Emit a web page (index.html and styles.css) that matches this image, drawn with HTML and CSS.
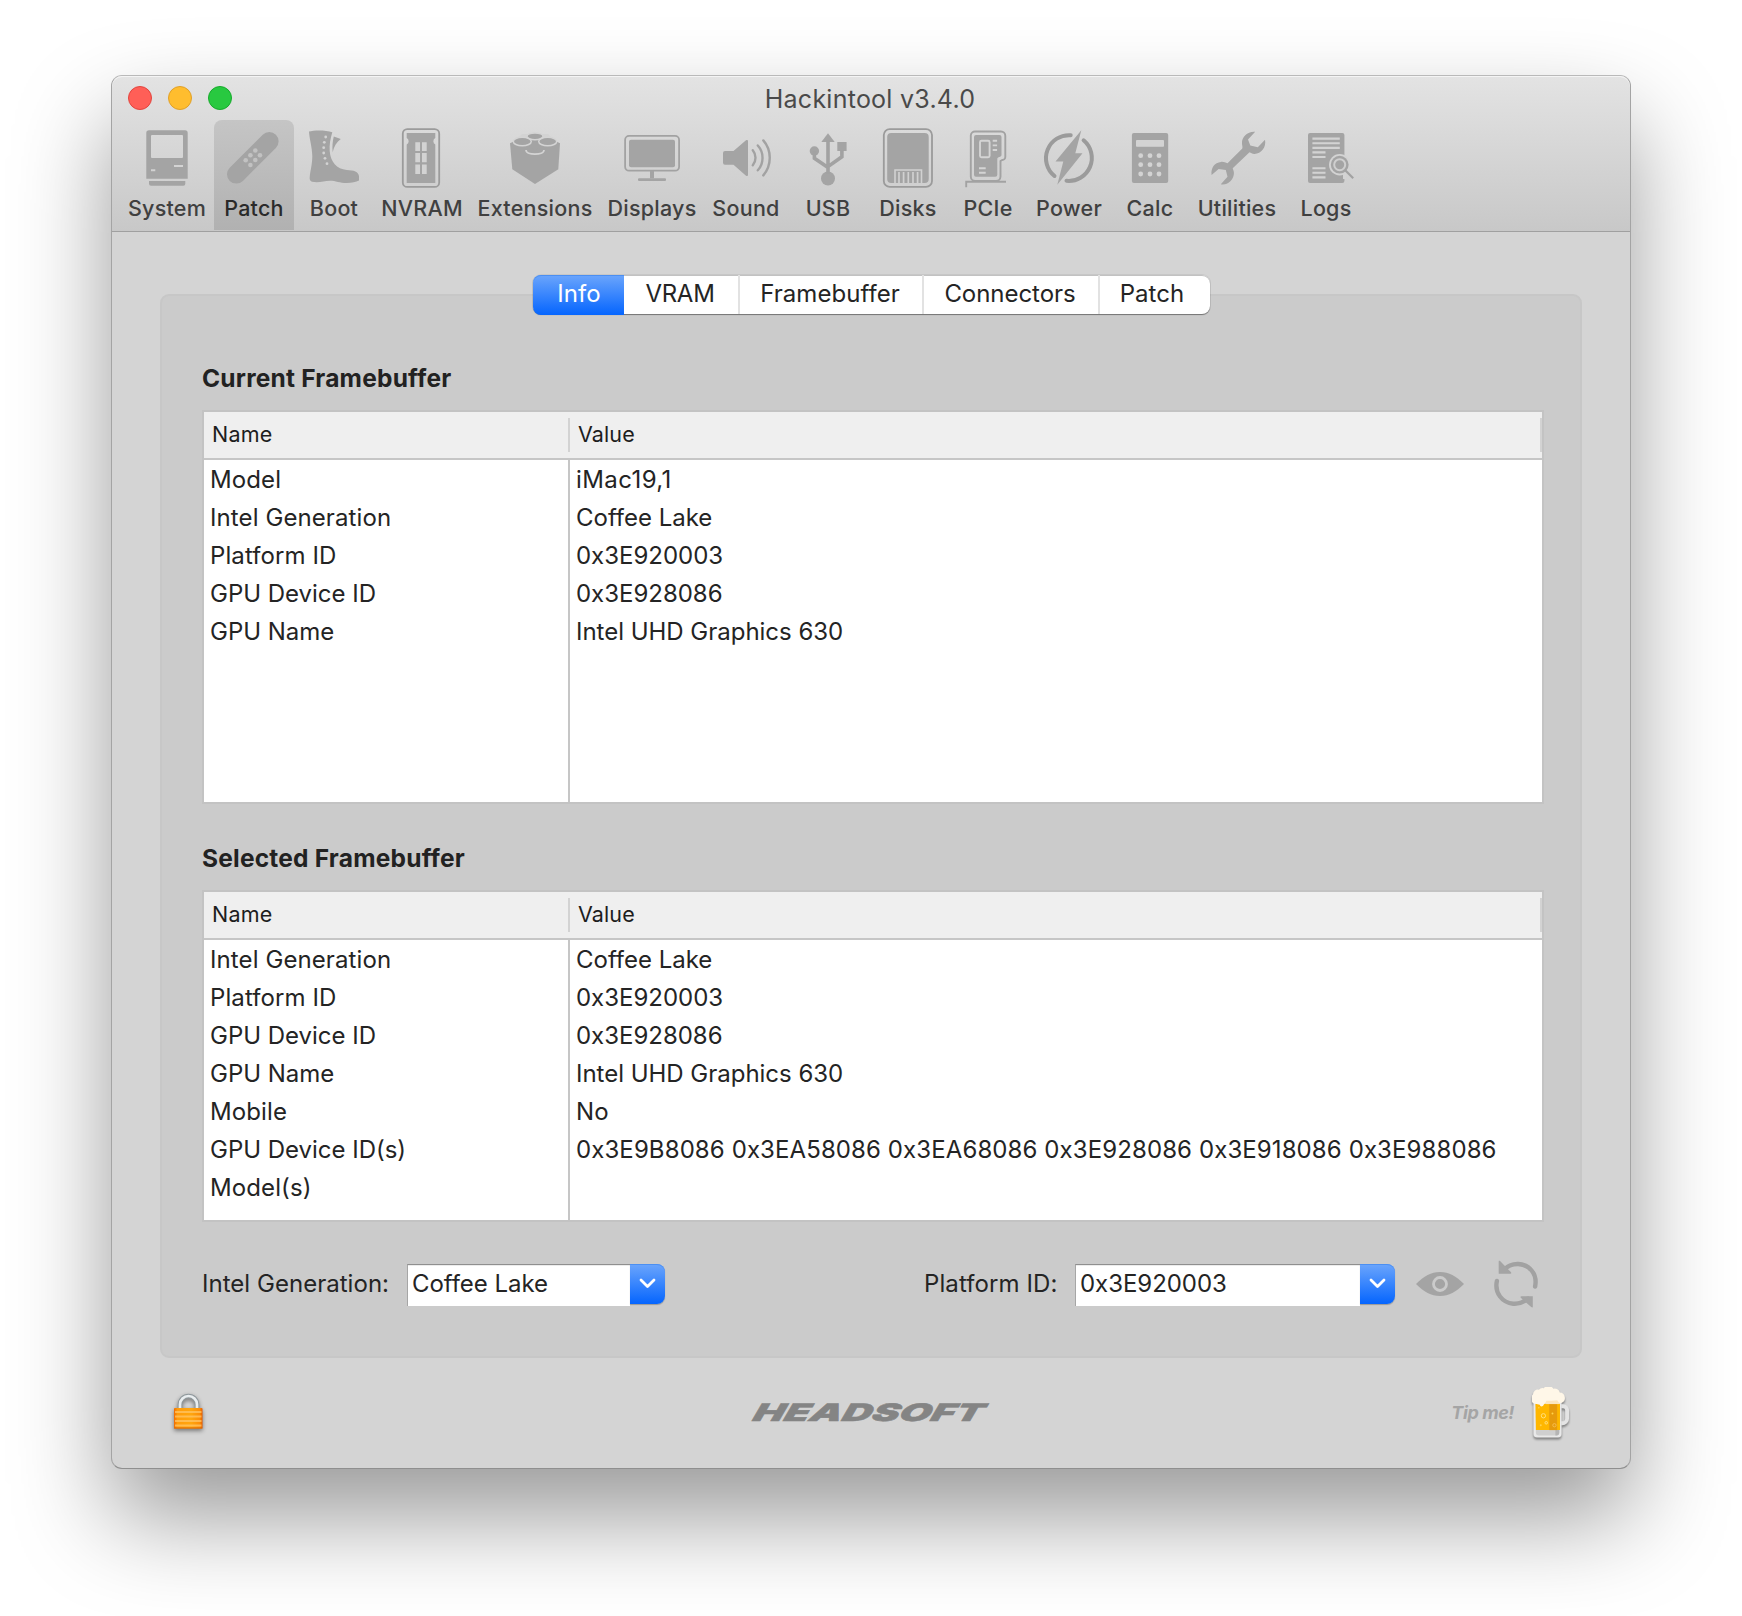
FILE: index.html
```html
<!DOCTYPE html>
<html lang="en">
<head>
<meta charset="utf-8">
<title>Hackintool v3.4.0</title>
<link rel="stylesheet" href="styles.css">
</head>
<body>
<main class="window">
  <header class="chrome">
    <div class="titlebar">
      <div class="lights"><i class="light close"></i><i class="light minimise"></i><i class="light zoom"></i></div>
      <h1 class="title">Hackintool v3.4.0</h1>
    </div>
    <nav class="toolbar">
      <a class="tool w94">
        <svg class="icon" viewBox="0 0 64 64"><path fill-rule="evenodd" d="M14 4.3h36a2.7 2.7 0 0 1 2.7 2.7v45.7H11.3V7A2.7 2.7 0 0 1 14 4.3zM17 9a1 1 0 0 0-1 1v21a1 1 0 0 0 1 1h30a1 1 0 0 0 1-1V10a1 1 0 0 0-1-1zM39 39v2h9v-2zM16 43.3v2h4.3v-2z"/><path d="M14 55h36.3v2.700a2 2 0 0 1-2 2H16a2 2 0 0 1-2-2z"/></svg>
        <span>System</span></a>
      <a class="tool w80 active">
        <svg class="icon" viewBox="0 0 64 64"><path d="M14.3 48.3l33-33" stroke="#a4a4a4" stroke-width="18.6" stroke-linecap="round"/><g fill="#c2c2c2"><circle cx="33.3" cy="24.5" r="2.3"/><circle cx="38" cy="29.3" r="2.3"/><circle cx="28.4" cy="29.3" r="2.3"/><circle cx="33.3" cy="34" r="2.3"/><circle cx="23.7" cy="34.2" r="2.3"/><circle cx="28.4" cy="39" r="2.3"/></g></svg>
        <span>Patch</span></a>
      <a class="tool w80">
        <svg class="icon" viewBox="0 0 64 64"><path d="M7 5.6C12 4 24 4 30.3 6.3 28.3 13 27.300 19 27.700 25c.8 11 7 18 17 19 7 .3 12 1.500 12.300 6.500v4c-3 1.500-7 2.500-12.300 2.500-7 0-11-2.300-16.700-2.300-6 0-11 2.500-18 1-2-.7-2.500-2-2.300-4.400.6-7 2.500-12 2.600-21C10.200 21 7.500 14 7 5.600z"/><path d="M31.800 10.500l7 2.400c-4 3-7 7.500-8.100 13.400-.6-5.500-.2-11 1.100-15.800z"/><g class="cut"><circle cx="23.700" cy="11" r="1.400"/><circle cx="22.300" cy="16.300" r="1.400"/><circle cx="21.700" cy="21.700" r="1.400"/><circle cx="21.700" cy="27" r="1.400"/><circle cx="23" cy="32.300" r="1.400"/><circle cx="25" cy="37.700" r="1.400"/></g></svg>
        <span>Boot</span></a>
      <a class="tool w96">
        <svg class="icon" viewBox="0 0 64 64"><rect class="line dark" x="12.800" y="3.100" width="36.400" height="57.800" rx="4.500" stroke-width="1.800"/><path d="M16.700 7h28.600v5a3.600 3.600 0 0 0 0 6.400V57H16.700V18.400a3.600 3.600 0 0 0 0-6.400z"/><g class="cut"><path d="M25.300 16.300H30V25h-4.700zM32 16.300h4.700V25H32zM25.300 27H30v9.300h-4.700zM32 27h4.700v9.300H32zM25.300 38.500H30V48h-4.700zM32 38.500h4.700V48H32z"/></g></svg>
        <span>NVRAM</span></a>
      <a class="tool w130">
        <svg class="icon" viewBox="0 0 64 64"><path d="M7 17.300L14 14h36l7 3.300-1.700 26L32 58 9.300 43.300z"/><path d="M25 13.500h14v-3H25z"/><g stroke="#d4d4d4" stroke-width="1.500"><path class="cut" d="M14 13l5-5h26l5 5-10 4.300L32 14l-8 3.300z" stroke="none"/><path d="M20 17.500l12-5.500 12 5.500L32 24z" stroke="none"/><ellipse cx="32" cy="10.300" rx="8" ry="3.400"/><ellipse cx="19.300" cy="15.500" rx="9" ry="4.300"/><ellipse cx="44.700" cy="15.500" rx="9" ry="4.300"/></g><path d="M23 24c0 5.500 18 5.500 18 0" fill="none" stroke="#d4d4d4" stroke-width="1.700"/></svg>
        <span>Extensions</span></a>
      <a class="tool w104">
        <svg class="icon" viewBox="0 0 64 64"><rect class="line" x="5.100" y="9.900" width="54" height="34.800" rx="4" stroke-width="1.800"/><rect x="9" y="13.700" width="46" height="27.600" rx="2"/><path d="M30 45h4v7.300h-4z"/><rect x="18" y="52.200" width="28" height="2.700" rx="1"/></svg>
        <span>Displays</span></a>
      <a class="tool w84">
        <svg class="icon" viewBox="0 0 64 64"><path d="M11 25h8.500L32 14.300c1-.6 2-.3 2 1v33.400c0 1.300-1 1.600-2 1L19.500 38.700H11a2 2 0 0 1-2-2V27a2 2 0 0 1 2-2z"/><path class="line" stroke-linecap="round" stroke-width="2.400" d="M38.800 24.300c3.600 4.400 3.600 10.600 0 15M43.800 19.500c6.300 7 6.300 17.800 0 24.800M49.300 14.400c8.600 9.700 8.600 25.200 0 35"/></svg>
        <span>Sound</span></a>
      <a class="tool w80">
        <svg class="icon" viewBox="0 0 64 64"><path d="M32 7.300L38.700 16H25.300z"/><circle cx="32" cy="52.500" r="7"/><circle cx="18.400" cy="25" r="4.700"/><path d="M41.300 16h9.300v9h-9.300z"/><path class="line" stroke-width="3.600" d="M32 14v34M18.400 25v7.300L32 41.600M45.900 24v6.700L32 40.600"/></svg>
        <span>USB</span></a>
      <a class="tool w80">
        <svg class="icon" viewBox="0 0 64 64"><rect class="line dark" x="7.800" y="3.100" width="48.200" height="57.800" rx="6" stroke-width="1.800"/><rect x="11.200" y="7" width="41.500" height="50" rx="4"/><path d="M19 57V44h26.500v13" fill="none" stroke="#d1d1d1" stroke-width="1.600"/><path d="M23 46v11M27.600 46v11M32.300 46v11M37 46v11M41.600 46v11" stroke="#d1d1d1" stroke-width="1.700"/></svg>
        <span>Disks</span></a>
      <a class="tool w80">
        <svg class="icon" viewBox="0 0 64 64"><path class="line" stroke-width="1.900" d="M19 5.500h26a4.300 4.300 0 0 1 4.300 4.300V31a3 3 0 0 1-3 3l-1.800 1v15.500a4.500 4.500 0 0 1-4.500 4.500H19.300a4.500 4.500 0 0 1-4.500-4.500v-41A4.200 4.200 0 0 1 19 5.500zM50 55.800H10.200v5.500"/><path d="M20 9h23.500a2 2 0 0 1 2 2v18c0 2.500-4.200 1.500-4.200 4v15.700a2 2 0 0 1-2 2H20a2 2 0 0 1-2-2V11a2 2 0 0 1 2-2z"/><g fill="none" stroke="#d4d4d4" stroke-width="1.900"><rect x="24" y="14.700" width="9.600" height="16.600" rx="1.500"/><path d="M36.700 14.800h4.400M36.700 19.400h4.400M36.700 24h4.400M23 42.300h6.700M23 46.800h6.700"/></g></svg>
        <span>PCIe</span></a>
      <a class="tool w82">
        <svg class="icon" viewBox="0 0 64 64"><path class="line dark" stroke-width="4" stroke-linecap="round" d="M33.700 9.200A23 23 0 0 0 17.500 50M46.600 14.300A23 23 0 0 1 29.500 54.800"/><path d="M44.300 4.300l-6 22.900h7.200L20.300 58.700l6-23.200h-7.800z"/></svg>
        <span>Power</span></a>
      <a class="tool w80">
        <svg class="icon" viewBox="0 0 64 64"><rect x="13.900" y="7" width="36.300" height="50" rx="2"/><g class="cut"><rect x="18" y="14" width="28" height="6.700" rx=".8"/><circle cx="22.700" cy="29.700" r="2.400"/><circle cx="32" cy="29.700" r="2.400"/><circle cx="41" cy="29.700" r="2.400"/><circle cx="22.700" cy="38.700" r="2.400"/><circle cx="32" cy="38.700" r="2.400"/><circle cx="41" cy="38.700" r="2.400"/><circle cx="22.700" cy="48" r="2.400"/><circle cx="32" cy="48" r="2.400"/><circle cx="41" cy="48" r="2.400"/></g></svg>
        <span>Calc</span></a>
      <a class="tool w94">
        <svg class="icon" viewBox="0 0 64 64"><path d="M50.200 5.700C43 5 36.500 10.500 37 17.300c0 2.200.8 3.500.3 5.200L22.500 37.200c-2-.3-3.700-1.600-6.500-1.300C9.500 36.300 5.600 42 6.600 49l7-5.900 7.200.9 1.700 6.700-6.700 7.500c6 1.400 12.200-3.300 13.100-10.300.3-2.500-.8-3.700-1.200-5.600l16.800-16c1.800.6 2.500 1.700 5 1.600C56.300 27.800 61.500 21 60 13.700l-7.200 7.500-7.500-1.600L43 13.500z"/></svg>
        <span>Utilities</span></a>
      <a class="tool w84 logs">
        <svg class="icon" viewBox="0 0 64 64"><rect x="16" y="7" width="36.400" height="50" rx="2"/><path d="M20.400 12.600h27.400M20.400 17.200h27.400M20.400 21.900h27.400M20.400 26.400h13.100M20.400 31h13.100M20.400 42.200h13.100M20.400 46.800h13.100M20.400 51.400h13.100" stroke="#d3d3d3" stroke-width="2.100"/><circle class="cut" cx="47.700" cy="38.700" r="10.700"/><path class="cut" d="M51 40l4 3-1 10h-3z"/><circle cx="47.700" cy="38.700" r="8.900"/><circle cx="47.700" cy="38.700" r="5.500" fill="none" stroke="#cfcfcf" stroke-width="2"/><path class="line" stroke-width="2.200" d="M53 44l8.200 8.300"/></svg>
        <span>Logs</span></a>
    </nav>
  </header>

  <section class="content">
    <div class="tabs">
      <button class="tab t1 selected">Info</button><button class="tab t2">VRAM</button><button class="tab t3">Framebuffer</button><button class="tab t4">Connectors</button><button class="tab t5">Patch</button>
    </div>
    <div class="panel">
      <h2>Current Framebuffer</h2>
      <div class="table tall">
        <div class="thead"><div class="c1"><span>Name</span></div><div class="c2"><span>Value</span></div></div>
        <div class="tbody">
          <div class="c1"><div>Model</div><div>Intel Generation</div><div>Platform ID</div><div class="tight">GPU Device ID</div><div class="tight">GPU Name</div></div>
          <div class="c2"><div class="loose">iMac19,1</div><div class="tight">Coffee Lake</div><div class="tight">0x3E920003</div><div class="tight">0x3E928086</div><div class="tight">Intel UHD Graphics 630</div></div>
        </div>
      </div>
      <h2>Selected Framebuffer</h2>
      <div class="table short">
        <div class="thead"><div class="c1"><span>Name</span></div><div class="c2"><span>Value</span></div></div>
        <div class="tbody">
          <div class="c1"><div>Intel Generation</div><div>Platform ID</div><div class="tight">GPU Device ID</div><div class="tight">GPU Name</div><div>Mobile</div><div class="tight">GPU Device ID(s)</div><div>Model(s)</div></div>
          <div class="c2"><div class="tight">Coffee Lake</div><div class="tight">0x3E920003</div><div class="tight">0x3E928086</div><div class="tight">Intel UHD Graphics 630</div><div>No</div><div>0x3E9B8086 0x3EA58086 0x3EA68086 0x3E928086 0x3E918086 0x3E988086</div></div>
        </div>
      </div>
      <div class="controls">
        <label class="lab1">Intel Generation:</label>
        <div class="combo combo1"><span class="field">Coffee Lake</span><span class="drop"><svg width="17" height="12" viewBox="0 0 17 12"><path d="M2 2l6.500 6.500L15 2"/></svg></span></div>
        <label class="lab2">Platform ID:</label>
        <div class="combo combo2"><span class="field">0x3E920003</span><span class="drop"><svg width="17" height="12" viewBox="0 0 17 12"><path d="M2 2l6.500 6.500L15 2"/></svg></span></div>
        <svg class="eye" viewBox="0 0 48 24"><path d="M0 12C8 4 15 0 24 0s16 4 24 12c-8 8-15 12-24 12S8 20 0 12z"/><circle cx="24" cy="12" r="6.500" fill="none" stroke="#cbcbcb" stroke-width="2.800"/></svg>
        <svg class="refresh" viewBox="0 0 48 48"><path class="line" stroke-width="4.400" stroke-linecap="round" d="M11.500 10C20 1.500 33 2.200 40 11c3.500 4.500 4.200 10 3.100 15.500M36 38.500C27 46.500 14.500 45 8 36.500c-3.500-4.700-4.300-10-3.100-15.500"/><path d="M6.700 1.300v12.500h11.800c1-.1 1-1.300.3-1.900L8.300 1.300c-.7-.6-1.600-.6-1.600 0zM40.800 47V36.300H29.500c-1.200.1-1.300 1-.5 1.700L39.200 47c.7.600 1.600.6 1.600 0z"/></svg>
      </div>
    </div>
  </section>

  <footer class="footer">
    <svg class="lock" viewBox="0 0 40 46">
      <defs><linearGradient id="gold"><stop offset="0" stop-color="#ee6a00"/><stop offset=".12" stop-color="#ff9c0c"/><stop offset=".6" stop-color="#ffa60f"/><stop offset=".9" stop-color="#fb8e08"/><stop offset="1" stop-color="#e75b00"/></linearGradient></defs>
      <path d="M12 21v-6.500a8.500 8.500 0 0 1 17 0V21" fill="none" stroke="#8f989c" stroke-width="4.600"/>
      <path d="M12 21v-6.500a8.500 8.500 0 0 1 17 0V21" fill="none" stroke="#e9edef" stroke-width="2.700"/>
      <rect x="6" y="18" width="28.500" height="20.500" rx="1" fill="url(#gold)"/>
      <path d="M7 22h26.500M7 26.500h26.500M7 31h26.500M7 35.500h26.500" stroke="#ffc566" stroke-width="1.900" opacity=".75"/>
      <path d="M6 38h28.500" stroke="#d96500"/>
    </svg>
    <div class="brand"><span>HEADSOFT</span></div>
    <div class="tip"><span>Tip me!</span>
      <svg class="beer" viewBox="0 0 40 56">
        <path d="M30 19.500h2a4 4 0 0 1 4 4v8.500a5 5 0 0 1-5 5H30" fill="none" stroke="#e4e4e4" stroke-width="4"/>
        <path d="M1.500 14h28.800v34a3.500 3.500 0 0 1-3.500 3.500H5A3.500 3.500 0 0 1 1.500 48z" fill="#e9e9e9"/>
        <path d="M4 44h24v2.500a3 3 0 0 1-3 3H7a3 3 0 0 1-3-3z" fill="#cfcfcf"/><path d="M24 44h4v2.500a3 3 0 0 1-3 3h-1z" fill="#b5b5b5"/>
        <path d="M3.500 17h25.200v27H4z" fill="#ffb700"/><path d="M17.700 17h8.100v27h-8.100z" fill="#e69a0c"/>
        <path d="M14 13h14.500v4.300H14z" fill="#fbe6c0"/>
        <path d="M2.500 17A5.500 5.500 0 0 1 1 7.500 5 5 0 0 1 7 2.500a5 5 0 0 1 5-1.500 6.500 6.500 0 0 1 10 .5 5.500 5.500 0 0 1 6.500 4A5.500 5.500 0 0 1 30.500 16c-2.500.7-3.500-.7-4.700-2.700-3.300.7-7.800.2-11 .7-1 1.700-1.600 3-2.800 4-.7 2.300-3.700 2.300-4 0-2-.4-3.500-1.500-5.500-1z" fill="#fff7e8"/>
        <g fill="none" stroke="#ffdf80" stroke-width="1"><circle cx="11.700" cy="29.300" r="2.200"/><circle cx="14.600" cy="36.500" r="1.300"/><circle cx="23" cy="39" r="1.700" stroke="#f5bb4e"/></g><g fill="#ffd24d"><circle cx="21" cy="27" r="1"/><circle cx="9" cy="39" r="1"/><circle cx="7" cy="21" r=".8"/></g>
      </svg>
    </div>
  </footer>
</main>
</body>
</html>
```
FILE: styles.css
```css
* { box-sizing: border-box; }

body {
  margin: 0;
  min-height: 1616px;
  padding: 75px 111px;
  background: #fff;
  font-family: Inter, "Liberation Sans", sans-serif;
  color: #242424;
  overflow: hidden;
}

.window {
  width: 1520px;
  height: 1394px;
  border: 1px solid;
  border-color: #b9b9b9 #a4a4a4 #8f8f8f;
  border-radius: 11px;
  background: #d4d4d4;
  box-shadow: 0 48px 96px rgba(0, 0, 0, .4);
  display: flex;
  flex-direction: column;
}

/* title bar and toolbar */
.chrome {
  height: 156px;
  border-bottom: 1px solid #a0a0a0;
  border-radius: 10px 10px 0 0;
  background: linear-gradient(#e3e3e3, #c8c8c8);
  box-shadow: inset 0 1px #f4f4f4;
}

.titlebar {
  height: 44px;
  display: grid;
  grid-template-columns: 1fr auto 1fr;
}

.lights { display: flex; gap: 16px; padding: 10px 0 0 16px; }
.light { width: 24px; height: 24px; border-radius: 50%; border: 1px solid; }
.close { background: #ff5f57; border-color: #e2453e; }
.minimise { background: #ffbd2e; border-color: #e0a028; }
.zoom { background: #28c940; border-color: #17ab2c; }

.title {
  margin: 0 2px 0 0;
  font-size: 25px;
  font-weight: 400;
  line-height: 47px;
  letter-spacing: .25px;
  color: #4a4a4a;
}

.toolbar { display: flex; padding-left: 8px; }

.tool {
  height: 110px;
  padding-top: 6px;
  display: flex;
  flex-direction: column;
  align-items: center;
  gap: 6px;
  font-size: 21.5px;
  font-weight: 450;
  line-height: 24px;
  letter-spacing: .25px;
  color: #404040;
}

.w80 { width: 80px; }
.w82 { width: 82px; }
.w84 { width: 84px; }
.w94 { width: 94px; }
.w96 { width: 96px; }
.w104 { width: 104px; }
.w130 { width: 130px; }

.active {
  border-radius: 8px 8px 0 0;
  background: linear-gradient(#c5c5c5, #b1b1b1);
  color: #2a2a2a;
}

.icon { width: 64px; height: 64px; fill: #a4a4a4; }
.logs .icon { margin-left: -4px; }
.line { fill: none; stroke: #a2a2a2; }
.dark { stroke: #9b9b9b; }
.cut { fill: #d3d3d3; }

/* tab strip sitting on the panel's top edge */
.content {
  padding: 43px 48px 0;
  display: flex;
  flex-direction: column;
  align-items: center;
}

.tabs {
  position: relative;
  z-index: 1;
  display: flex;
  height: 39px;
  margin-bottom: -20px;
  border-radius: 8px;
  background: #fff;
  box-shadow: inset 0 1px #c2c2c2, 0 0 0 1px rgba(0, 0, 0, .06), 0 1px 1px rgba(0, 0, 0, .4);
}

.tab {
  border: 0;
  border-right: 2px solid #e2e2e2;
  padding: 0 1px 1px 0;
  background: none;
  font: 24px/38px Inter, sans-serif;
  letter-spacing: .05px;
  color: #242424;
}

.t1 { width: 91px; }
.t2 { width: 116px; letter-spacing: -.3px; }
.t3 { width: 184px; }
.t4 { width: 176px; letter-spacing: -.05px; }
.t5 { width: 110px; border-right: 0; padding-right: 5px; }

.selected {
  height: 40px;
  padding: 0 0 2px 2px;
  border: 0;
  border-radius: 8px 0 0 8px;
  background: linear-gradient(#6ba5fc, #0565fe);
  color: #fff;
  box-shadow: inset 0 1px #4b8ff2;
}

.panel {
  width: 1422px;
  height: 1064px;
  padding: 67px 36px 0 40px;
  border: 2px solid #c7c7c7;
  border-radius: 9px;
  background: #cbcbcb;
}

h2 {
  margin: 0 0 17px;
  font-size: 24.5px;
  font-weight: 700;
  line-height: 30px;
  letter-spacing: .21px;
  color: #222;
}

/* two-column tables */
.table {
  width: 1342px;
  border: 2px solid #c3c3c3;
  background: #fff;
  display: flex;
  flex-direction: column;
}

.tall { height: 394px; margin-bottom: 39px; }
.short { height: 332px; margin-bottom: 42px; }

.thead, .tbody { display: grid; grid-template-columns: 366px 1fr; }

.thead {
  height: 48px;
  padding: 6px 0;
  border-bottom: 2px solid #c6c6c6;
  background: #efefef;
  font-size: 21.5px;
  line-height: 32px;
  letter-spacing: .2px;
  color: #1d1d1d;
}

.thead .c1, .thead .c2 { border-right: 2px solid #d3d3d3; padding-left: 8px; height: 34px; }
.thead .c2 { letter-spacing: .1px; }

.tbody {
  flex: 1;
  padding-top: 0;
  font-size: 24px;
  line-height: 38px;
  letter-spacing: .1px;
  white-space: nowrap;
}

.tbody > div { padding: 1px 0 0 6px; }
.tbody .c1 { border-right: 2px solid #c6c6c6; }
.tight { letter-spacing: -.02px; }
.loose { letter-spacing: .4px; }

/* controls under the tables */
.controls { display: flex; height: 42px; font-size: 24px; line-height: 39px; letter-spacing: .03px; }
.lab1 { width: 205px; }
.combo { display: flex; }
.combo1 { width: 258px; }
.lab2 { margin-left: 259px; width: 151px; letter-spacing: .1px; }
.combo2 { width: 320px; }

.field {
  flex: 1;
  height: 42px;
  padding-left: 4px;
  border-top: 1px solid #8f8f8f;
  border-left: 1px solid #a6a6a6;
  background: #fff;
  box-shadow: inset 0 1px #ececec;
  line-height: 37px;
  letter-spacing: -.05px;
}

.drop {
  width: 35px;
  height: 40px;
  border-radius: 0 8px 8px 0;
  background: linear-gradient(#6ba5fc, #0565fe);
  box-shadow: inset 0 1px #4b8ff2, 0 1px 1px rgba(0, 0, 0, .25);
  display: grid;
  place-items: center;
}

.drop path { fill: none; stroke: #fff; stroke-width: 2.8; stroke-linecap: round; stroke-linejoin: round; }

.eye { width: 48px; height: 24px; margin: 8px 0 0 21px; fill: #a4a4a4; }
.refresh { width: 48px; height: 48px; margin: -4px 0 0 28px; fill: #a4a4a4; }

/* footer */
.footer {
  height: 110px;
  padding: 0 59px 0 56px;
  display: grid;
  grid-template-columns: 1fr auto 1fr;
  align-items: center;
}

.lock { width: 40px; height: 46px; filter: drop-shadow(0 2px 2px rgba(0, 0, 0, .45)); }

.brand { width: 237px; display: flex; justify-content: center; }
.brand span {
  font-size: 24px;
  font-style: italic;
  font-weight: 900;
  line-height: 30px;
  color: #848484;
  -webkit-text-stroke: .5px #848484;
  transform: scaleX(1.71) skewX(-10deg);
}

.tip {
  display: flex;
  justify-content: flex-end;
  align-items: center;
  gap: 18px;
  font-size: 18px;
  font-style: italic;
  font-weight: 700;
  letter-spacing: -.43px;
  color: #a5a5a5;
}

.tip span { margin-top: -2px; }
.beer { width: 39px; height: 55px; margin-top: 2px; filter: drop-shadow(0 2px 1px rgba(0, 0, 0, .4)); }
```
